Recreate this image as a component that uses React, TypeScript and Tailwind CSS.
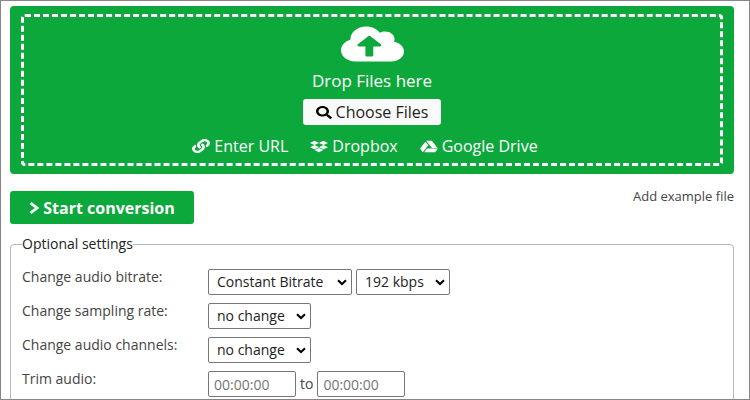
import type { ReactNode } from "react";
import { FaCloudUploadAlt, FaDropbox, FaGoogleDrive, FaLink, FaSearch } from "react-icons/fa";

const control =
  "h-[26px] rounded-xs border border-[#767676] bg-white text-sm";

function Select({ id, label, options, width }: { id: string; label?: string; options: string[]; width: string }) {
  return (
    <span className={`relative inline-block ${width}`}>
      <select id={id} aria-label={label} className={`${control} block w-full appearance-none pl-2 text-[#222]`}>
        {options.map((o) => (
          <option key={o}>{o}</option>
        ))}
      </select>
      <svg viewBox="0 0 10 7" className="pointer-events-none absolute top-[10px] right-[5px] h-[7px] w-[10px]" aria-hidden="true">
        <path d="M1 1.2 5 5 9 1.2" fill="none" stroke="#000" strokeWidth="2" />
      </svg>
    </span>
  );
}

function Row({ id, label, children }: { id: string; label: string; children: ReactNode }) {
  return (
    <div className="flex h-[34px] items-start">
      <label htmlFor={id} className="w-[186px] shrink-0 text-sm leading-4 text-[#444]">
        {label}
      </label>
      <div className="flex items-center gap-1 text-sm text-[#444]">{children}</div>
    </div>
  );
}

export default function App() {
  return (
    <main className="h-screen overflow-hidden border border-[#8a8488] bg-white pt-[5px] pr-[15px] pl-[9px] font-['Open_Sans','Noto_Sans',sans-serif]">
      <section className="rounded-sm bg-[#0ca83b] px-[11px] py-2 text-white">
        <div className="flex h-[152px] flex-col items-center rounded-sm border-[3px] border-dashed border-white pt-[7px]">
          <FaCloudUploadAlt className="h-10 w-[63px] shrink-0" preserveAspectRatio="none" />
          <p className="mt-[7px] text-[17px] leading-5">Drop Files here</p>
          <button type="button" className="mt-2 flex h-[26px] w-[138px] items-center justify-center gap-1 rounded-[3px] bg-[#fafafa] text-base leading-5 text-[#222]">
            <FaSearch className="h-[13px] w-4 text-black" preserveAspectRatio="none" />
            Choose Files
          </button>
          <div className="mt-[11px] flex gap-[22px] pr-[14px] text-base leading-5">
            <button type="button" className="flex items-center gap-1">
              <FaLink className="h-[14px] w-[18px]" preserveAspectRatio="none" />
              Enter URL
            </button>
            <button type="button" className="flex items-center gap-1">
              <FaDropbox className="h-[13px] w-[18px]" preserveAspectRatio="none" />
              Dropbox
            </button>
            <button type="button" className="flex items-center gap-1">
              <FaGoogleDrive className="h-[13px] w-[18px]" preserveAspectRatio="none" />
              Google Drive
            </button>
          </div>
        </div>
      </section>

      <div className="mt-[17px] flex items-start justify-between">
        <button type="button" className="flex h-[33px] w-[184px] items-center justify-center gap-1 rounded-[3px] bg-[#0ca83b] text-base font-bold text-white">
          <svg viewBox="0 0 10 12" className="h-3 w-[10px]" aria-hidden="true">
            <path d="M1.5 1 8 6 1.5 11" fill="none" stroke="currentColor" strokeWidth="2.8" />
          </svg>
          Start conversion
        </button>
        <a href="#example" className="text-[13px] leading-[10px] text-[#444]">
          Add example file
        </a>
      </div>

      <fieldset className="mt-3 rounded-sm border border-[#b8b8b8] pt-[17px] pb-8 pl-[11px]">
        <legend className="text-sm leading-4 text-[#222]">Optional settings</legend>
        <Row id="bitrate" label="Change audio bitrate:">
          <Select id="bitrate" options={["Constant Bitrate", "Variable Bitrate"]} width="w-[144px]" />
          <Select id="kbps" label="Bitrate value" options={["192 kbps", "256 kbps"]} width="w-[94px]" />
        </Row>
        <Row id="rate" label="Change sampling rate:">
          <Select id="rate" options={["no change"]} width="w-[103px]" />
        </Row>
        <Row id="channels" label="Change audio channels:">
          <Select id="channels" options={["no change"]} width="w-[103px]" />
        </Row>
        <Row id="from" label="Trim audio:">
          <input id="from" placeholder="00:00:00" className={`${control} w-[88px] px-[5px] placeholder:text-[#757575]`} />
          <label htmlFor="to">to</label>
          <input id="to" placeholder="00:00:00" className={`${control} w-[88px] px-[5px] placeholder:text-[#757575]`} />
        </Row>
      </fieldset>
    </main>
  );
}
